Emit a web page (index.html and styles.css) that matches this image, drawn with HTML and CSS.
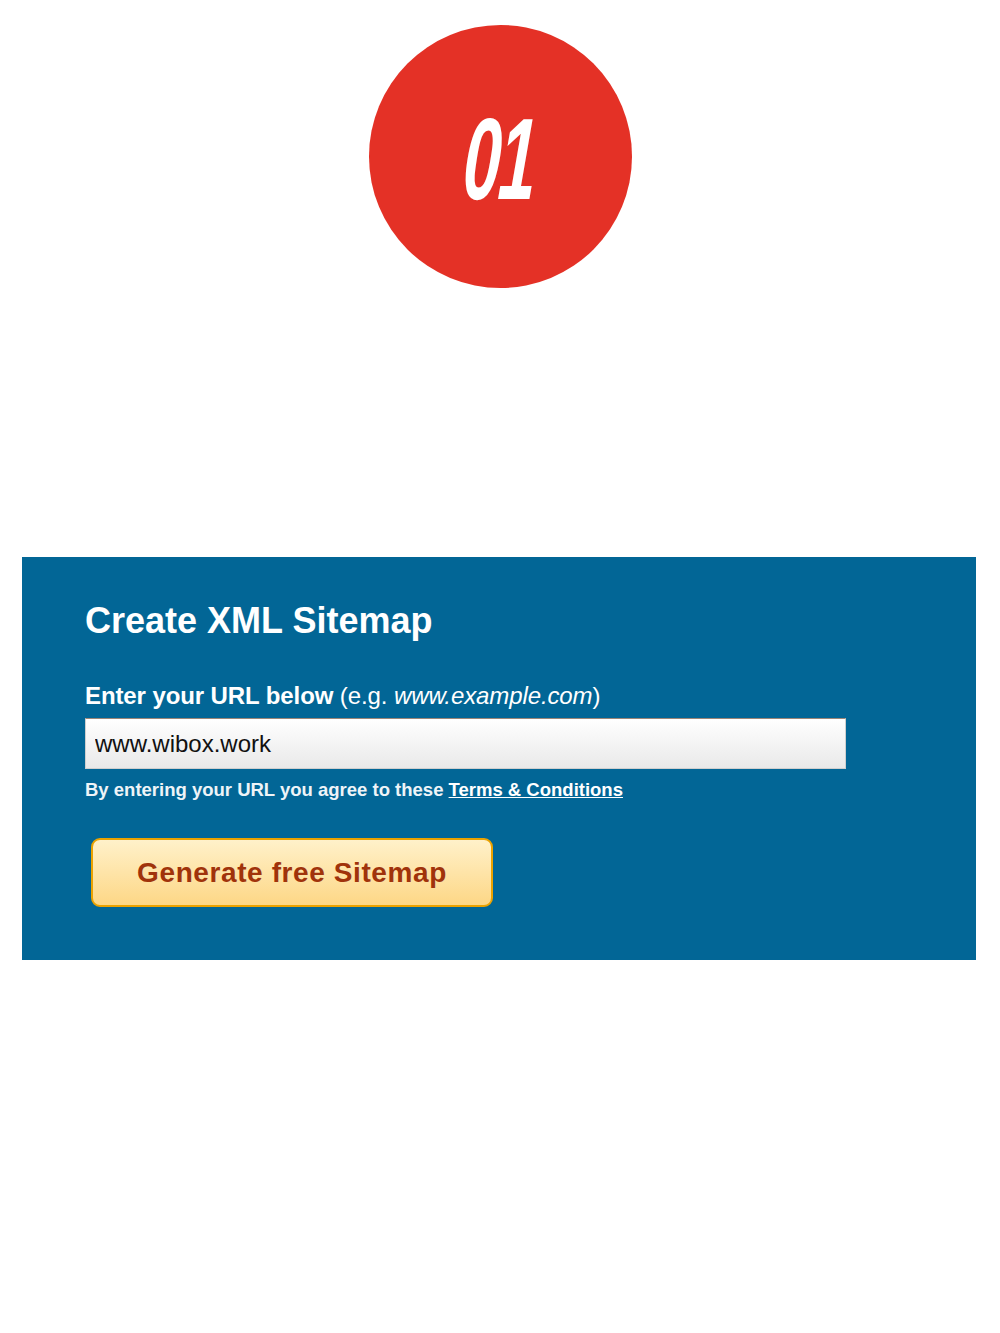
FILE: index.html
```html
<!DOCTYPE html>
<html>
<head>
    <title>Create XML Sitemap</title>
    <link rel="stylesheet" href="styles.css">
</head>
<body>
    <div class="step">
        <div class="step-badge"><span>01</span></div>
    </div>
    <div class="panel">
        <h1>Create XML Sitemap</h1>
        <form class="sitemap-form">
            <label for="url"><b>Enter your URL below</b> (e.g. <i>www.example.com</i>)</label>
            <input type="text" id="url" name="url" value="www.wibox.work">
            <p class="terms">By entering your URL you agree to these <a href="#">Terms &amp; Conditions</a></p>
            <button type="submit">Generate free Sitemap</button>
        </form>
    </div>
</body>
</html>
```

FILE: styles.css
```css
body {
    margin: 0;
    background-color: #fff;
    font-family: "Liberation Sans", Arial, sans-serif;
}
.step {
    display: flex;
    justify-content: center;
    padding-top: 25px;
}
.step-badge {
    width: 263px;
    height: 263px;
    border-radius: 50%;
    background-color: #e43126;
    display: flex;
    align-items: center;
    justify-content: center;
}
.step-badge span {
    color: #fff;
    font-family: "Liberation Sans", sans-serif;
    font-style: italic;
    font-weight: bold;
    font-size: 116px;
    line-height: 1;
    letter-spacing: -3px;
    transform: scaleX(0.58) skewX(-6deg);
    margin-top: 4px;
}
.panel {
    margin: 269px 24px 0 22px;
    background-color: #026696;
    padding: 43px 63px 53px;
    color: #fff;
}
h1 {
    margin: 0 0 40px;
    font-size: 36px;
}
.sitemap-form label {
    display: block;
    font-size: 24px;
    letter-spacing: -0.1px;
    margin-bottom: 8px;
}
.sitemap-form input {
    display: block;
    box-sizing: border-box;
    width: 761px;
    height: 51px;
    padding: 0 9px;
    border: 1px solid #cfcfcf;
    border-top-color: #9c8576;
    background: linear-gradient(#ffffff, #e9e9e9);
    font-family: "Liberation Sans", Arial, sans-serif;
    font-size: 24px;
    color: #111;
}
.terms {
    margin: 10px 0 0;
    font-size: 18.5px;
    font-weight: bold;
    color: #eef4f8;
}
.terms a {
    color: #fff;
}
button {
    margin: 37px 0 0 6px;
    width: 402px;
    height: 69px;
    border: 2px solid #eba200;
    border-radius: 9px;
    background: linear-gradient(#fff1ca, #fdd786);
    color: #a0330b;
    font-family: "Liberation Sans", Arial, sans-serif;
    font-size: 28px;
    font-weight: bold;
    letter-spacing: 0.6px;
    cursor: pointer;
}
```
